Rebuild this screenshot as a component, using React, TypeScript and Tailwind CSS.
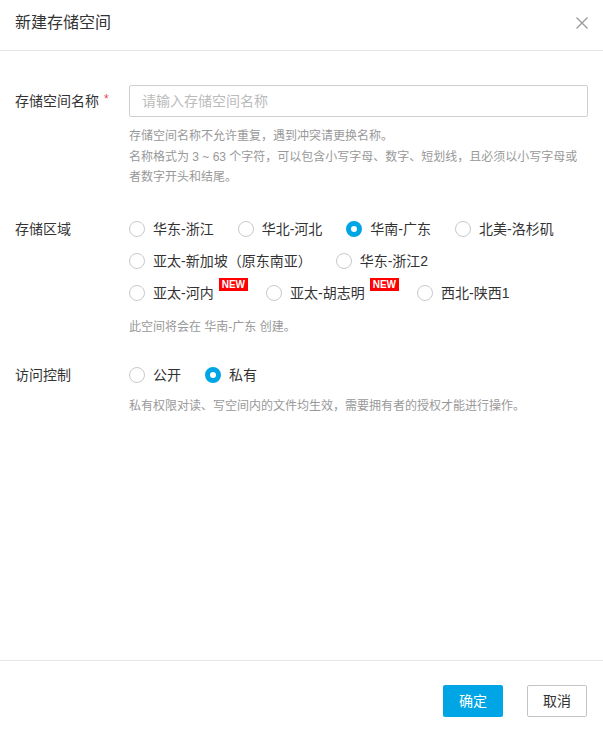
type Option = { label: string; checked?: boolean; badge?: boolean }

const regionRows: Option[][] = [
  [{ label: '华东-浙江' }, { label: '华北-河北' }, { label: '华南-广东', checked: true }, { label: '北美-洛杉矶' }],
  [{ label: '亚太-新加坡（原东南亚）' }, { label: '华东-浙江2' }],
  [{ label: '亚太-河内', badge: true }, { label: '亚太-胡志明', badge: true }, { label: '西北-陕西1' }],
]

const accessOptions: Option[] = [{ label: '公开' }, { label: '私有', checked: true }]

function Radio({ label, checked, badge }: Option) {
  return (
    <label className={`flex h-8 cursor-pointer items-center ${badge ? 'mr-[18px]' : 'mr-6'}`}>
      <span
        className={
          checked
            ? 'box-border h-4 w-4 shrink-0 rounded-full border-[5px] border-[#00a5e6] bg-white'
            : 'box-border h-4 w-4 shrink-0 rounded-full border border-[#c9c9c9] bg-white'
        }
      />
      <span className="ml-2 whitespace-nowrap text-sm text-[#333]">{label}</span>
      {badge && (
        <span className="ml-[5px] mt-[1px] self-start bg-[#ff0000] px-[3px] text-[10px] font-bold leading-[13px] text-white">
          NEW
        </span>
      )}
    </label>
  )
}

export default function App() {
  return (
    <div
      className="flex h-[733px] w-[603px] flex-col bg-white text-[#333]"
      style={{ fontFamily: '"Liberation Sans", "Noto Sans CJK SC", sans-serif' }}
    >
      {/* Header */}
      <div className="flex h-[51px] shrink-0 items-start justify-between border-b border-[#e6e6e6] px-[15px] pt-[13px]">
        <h1 className="text-base leading-5 text-[#333]">新建存储空间</h1>
        <button className="mt-[4px] flex h-3 w-3 items-center justify-center">
          <svg width="12" height="12" viewBox="0 0 12 12" fill="none" stroke="#999" strokeWidth={1.3}>
            <path d="M0.5 0.5L11.5 11.5M11.5 0.5L0.5 11.5" />
          </svg>
        </button>
      </div>

      {/* Body */}
      <div className="flex-1 px-[15px] pt-[34px]">
        {/* 名称 */}
        <div className="flex">
          <div className="flex h-8 w-[114px] shrink-0 items-center text-sm">
            存储空间名称
            <span className="ml-[5px] -mt-1 text-xs text-[#e5484d]">*</span>
          </div>
          <div className="flex-1">
            <input
              className="box-border h-8 w-full rounded-[2px] border border-[#cfcfcf] px-3 text-sm outline-none placeholder:text-[#bbb]"
              placeholder="请输入存储空间名称"
            />
            <p className="mt-[9px] text-xs leading-[20.5px] text-[#999]">
              存储空间名称不允许重复，遇到冲突请更换名称。
              <br />
              名称格式为 3 ~ 63 个字符，可以包含小写字母、数字、短划线，且必须以小写字母或者数字开头和结尾。
            </p>
          </div>
        </div>

        {/* 存储区域 */}
        <div className="mt-[25px] flex">
          <div className="h-8 w-[114px] shrink-0 text-sm leading-8">存储区域</div>
          <div className="flex-1">
            {regionRows.map((row, i) => (
              <div key={i} className="flex">
                {row.map(o => (
                  <Radio key={o.label} {...o} />
                ))}
              </div>
            ))}
            <p className="mt-2 text-xs leading-5 text-[#999]">此空间将会在 华南-广东 创建。</p>
          </div>
        </div>

        {/* 访问控制 */}
        <div className="mt-[22px] flex">
          <div className="h-8 w-[114px] shrink-0 text-sm leading-8">访问控制</div>
          <div className="flex-1">
            <div className="flex">
              {accessOptions.map(o => (
                <Radio key={o.label} {...o} />
              ))}
            </div>
            <p className="mt-[5px] text-xs leading-5 text-[#999]">
              私有权限对读、写空间内的文件均生效，需要拥有者的授权才能进行操作。
            </p>
          </div>
        </div>
      </div>

      {/* Footer */}
      <div className="flex h-[73px] shrink-0 justify-end gap-6 border-t border-[#e6e6e6] pr-4 pt-6">
        <button className="h-8 w-[60px] rounded-[2px] bg-[#00a5e6] text-sm text-white">确定</button>
        <button className="box-border h-8 w-[60px] rounded-[2px] border border-[#c4c4c4] bg-white text-sm text-[#333]">
          取消
        </button>
      </div>
    </div>
  )
}
